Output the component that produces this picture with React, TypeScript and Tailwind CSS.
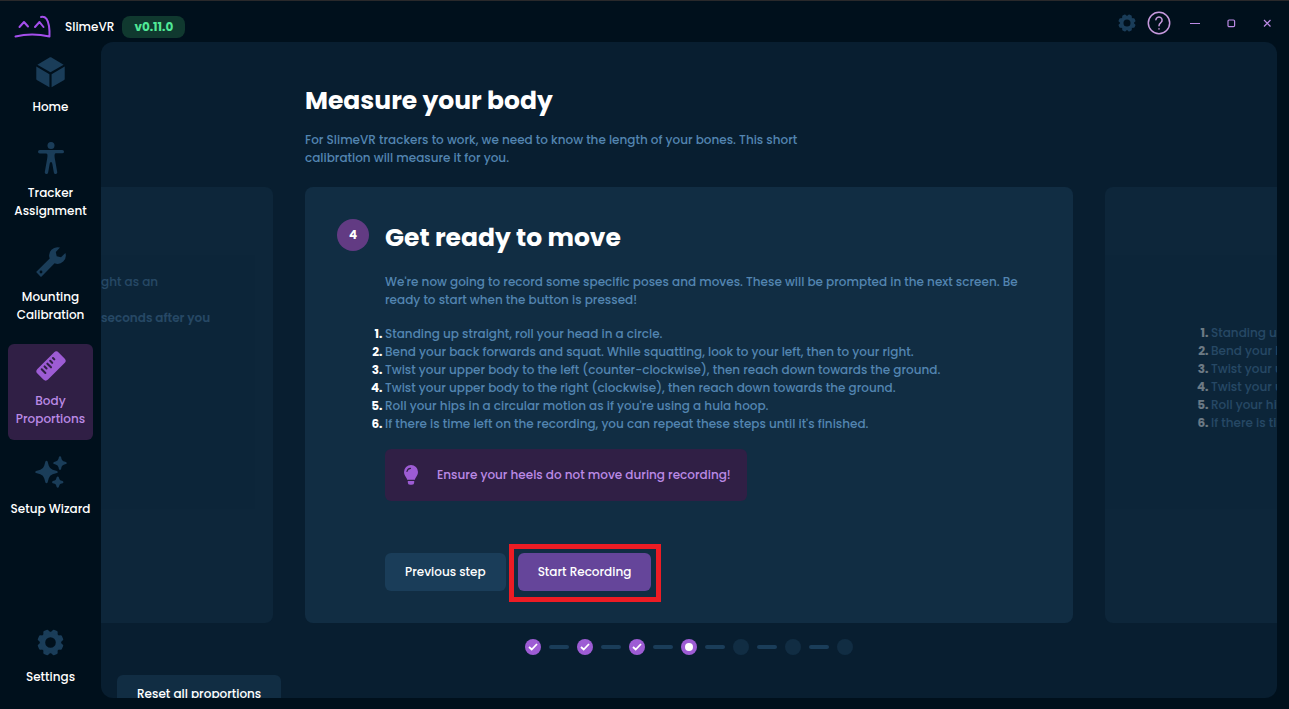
import type { ReactNode } from "react";
import { HiCube, HiSparkles } from "react-icons/hi2";
import { IoBody } from "react-icons/io5";

const MOVES = [
  "Standing up straight, roll your head in a circle.",
  "Bend your back forwards and squat. While squatting, look to your left, then to your right.",
  "Twist your upper body to the left (counter-clockwise), then reach down towards the ground.",
  "Twist your upper body to the right (clockwise), then reach down towards the ground.",
  "Roll your hips in a circular motion as if you're using a hula hoop.",
  "If there is time left on the recording, you can repeat these steps until it's finished.",
];

const PROGRESS = ["done", "done", "done", "current", "todo", "todo", "todo"];

const GEAR_TEETH = [22.5, 67.5, 112.5, 157.5, 202.5, 247.5, 292.5, 337.5];

function SlimeLogo() {
  return (
    <svg width="38" height="24" viewBox="0 0 38 24" fill="none" stroke="#a44fec" strokeWidth="2" strokeLinecap="round" strokeLinejoin="round">
      <path d="M27 2c5-1 7 3 8 9 .6 4 .6 7 .5 10.500C24 19 12 19 1.500 21.500" />
      <path d="M5.500 12l4.500-5 4 4.500M21 12L25.500 7l4 5" />
    </svg>
  );
}

function GearIcon({ size }: { size: number }) {
  return (
    <svg width={size} height={size} viewBox="0 0 28 28" fill="#1a3d59">
      <circle cx="14" cy="14" r="8.300" fill="none" stroke="#1a3d59" strokeWidth="5.600" />
      {GEAR_TEETH.map((angle) => (
        <path
          key={angle}
          transform={`rotate(${angle} 14 14)`}
          d="M10 4.500L11.200 1.300Q11.500.5 12.300.5H15.700Q16.500.5 16.800 1.300L18 4.500Z"
        />
      ))}
    </svg>
  );
}

function WrenchIcon() {
  return (
    <svg width="30" height="30" viewBox="0 0 30 30" fill="#1a3d59">
      <path
        fillRule="evenodd"
        d="M24 .6L19.800 5l.9 4.300 4.300.9L29.400 6a8.300 8.300 0 0 1-10.800 10.300L5.600 29.400Q5 30 4.400 29.400L.6 25.600Q0 25 .6 24.400L13.700 11.400A8.300 8.300 0 0 1 24 .6ZM5 23.600a1.400 1.400 0 1 0 0 2.800 1.400 1.400 0 0 0 0-2.800Z"
      />
    </svg>
  );
}

function RulerIcon() {
  return (
    <svg width="30" height="30" viewBox="0 0 32 32">
      <g transform="rotate(-45 16 16)">
        <rect x="0" y="8" width="32" height="16" rx="3.500" fill="#9d5cd4" />
        <path d="M6.500 11.500v5.500M10.800 11.500v3M15 11.500v5.500M19.300 11.500v3M23.500 11.500v2" stroke="#301f45" strokeWidth="2.200" strokeLinecap="round" />
      </g>
    </svg>
  );
}

function BulbIcon() {
  return (
    <svg width="20" height="20" viewBox="0 0 20 20">
      <path d="M10 0a7 7 0 0 0-7 7c0 3 1.700 4.500 2.600 6.200.3.600.4 1 .5 1.600h7.800c.1-.6.200-1 .5-1.600C15.300 11.500 17 10 17 7a7 7 0 0 0-7-7Z" fill="#9d5cd4" />
      <path d="M6.800 16h6.400v1.500a2.300 2.300 0 0 1-2.300 2.300h-1.800a2.300 2.300 0 0 1-2.300-2.300Z" fill="#9d5cd4" />
      <path d="M6 6.500A4 4 0 0 1 9.500 3.300" stroke="#301f45" strokeWidth="1.200" fill="none" strokeLinecap="round" />
    </svg>
  );
}

function NavItem({ icon, active, children }: { icon: ReactNode; active?: boolean; children: ReactNode }) {
  return (
    <a
      href="#"
      className={
        active
          ? "flex flex-col items-center gap-2 rounded-md bg-[#301f45] pt-1.5 pb-3 text-center text-[#bb8ae5]"
          : "flex flex-col items-center gap-2 pt-1.5 pb-3 text-center text-white"
      }
    >
      <span className="flex min-h-8 items-center justify-center text-[#1a3d59]">{icon}</span>
      <span className="pt-0.5 whitespace-nowrap">{children}</span>
    </a>
  );
}

function Moves() {
  return (
    <ol className="list-decimal whitespace-nowrap text-[#5385b1] marker:font-bold marker:text-white">
      {MOVES.map((move) => (
        <li key={move}>{move}</li>
      ))}
    </ol>
  );
}

export default function App() {
  return (
    <div className="flex h-screen flex-col overflow-hidden border-t border-[#29292b] bg-[#00101c] font-['Poppins','Inter',sans-serif] text-[12px] leading-[18px] font-medium text-white">
      <header className="flex h-[41px] shrink-0 items-center pt-2.5 pr-4 pl-3.5">
        <SlimeLogo />
        <span className="ml-[13px]">SlimeVR</span>
        <span className="ml-2 rounded-lg bg-[#10392f] px-3 py-0.5 font-bold text-[#50e897]">v0.11.0</span>
        <div className="ml-auto flex items-center pb-2">
          <button aria-label="Settings">
            <GearIcon size={18} />
          </button>
          <button aria-label="Help" className="ml-[11px]">
            <svg width="24" height="24" viewBox="0 0 24 24" fill="none" stroke="#c79ade" strokeWidth="1.500" strokeLinecap="round">
              <circle cx="12" cy="12" r="10.700" />
              <path d="M8.900 8.800a3.100 3.100 0 1 1 5 2.700c-1.200.9-1.900 1.400-1.900 3.200M12 17.800v.1" />
            </svg>
          </button>
          <button aria-label="Minimize" className="ml-4">
            <svg width="16" height="16" viewBox="0 0 16 16" stroke="#bb8ae5">
              <path d="M3 8.500h10" />
            </svg>
          </button>
          <button aria-label="Maximize" className="ml-5">
            <svg width="16" height="16" viewBox="0 0 16 16" fill="none" stroke="#bb8ae5" strokeWidth="1.200">
              <rect x="5" y="5" width="6.600" height="6.600" rx="1.200" />
            </svg>
          </button>
          <button aria-label="Close" className="ml-5 -mr-0.5">
            <svg width="16" height="16" viewBox="0 0 16 16" stroke="#bb8ae5" strokeWidth="1.200">
              <path d="M5 5l6.500 6.500M11.500 5L5 11.500" />
            </svg>
          </button>
        </div>
      </header>

      <div className="flex min-h-0 grow pr-3 pb-[11px]">
        <nav className="flex w-[101px] shrink-0 flex-col gap-2 px-2 pt-2">
          <NavItem icon={<HiCube size={35} className="-my-0.5" />}>Home</NavItem>
          <NavItem icon={<IoBody size={32} />}>
            Tracker
            <br />
            Assignment
          </NavItem>
          <NavItem icon={<WrenchIcon />}>
            Mounting
            <br />
            Calibration
          </NavItem>
          <NavItem active icon={<RulerIcon />}>
            Body
            <br />
            Proportions
          </NavItem>
          <NavItem icon={<HiSparkles size={36} />}>Setup Wizard</NavItem>
          <div className="mt-auto">
            <NavItem icon={<GearIcon size={27} />}>Settings</NavItem>
          </div>
        </nav>

        <main className="flex min-w-0 grow flex-col overflow-hidden rounded-xl bg-[#081e30] pt-[41px]">
          <div className="mx-auto w-[768px]">
            <h1 className="text-[25px] leading-9 font-bold">Measure your body</h1>
            <p className="max-w-[512px] pt-3 text-[#5385b1]">
              For SlimeVR trackers to work, we need to know the length of your bones. This short calibration will measure it for you.
            </p>
          </div>

          <div className="mt-5 flex shrink-0 justify-center gap-8">
            <section className="w-[768px] shrink-0 rounded-lg bg-[#112d43] pt-[86px] opacity-50">
              <p className="ml-auto w-[172px] text-[#5385b1] opacity-80">
                ght as an
                <br />
                <br />
                <span className="font-semibold">seconds after you</span>
              </p>
            </section>

            <section className="flex h-[436px] w-[768px] shrink-0 gap-4 rounded-lg bg-[#112d43] p-8">
              <span className="flex size-8 shrink-0 items-center justify-center rounded-full bg-[#623b83] font-bold">4</span>
              <div className="flex grow flex-col items-start">
                <h2 className="pt-px text-[25px] leading-9 font-bold">Get ready to move</h2>
                <p className="max-w-[640px] pt-[17px] pb-4 text-[#5385b1]">
                  We're now going to record some specific poses and moves. These will be prompted in the next screen. Be ready to start when the button is pressed!
                </p>
                <Moves />
                <div className="mt-4 flex items-center gap-4 rounded-md bg-[#301f45] p-4 text-[#bb8ae5]">
                  <BulbIcon />
                  <span>Ensure your heels do not move during recording!</span>
                </div>
                <div className="mt-auto -mb-[11px] flex items-start gap-[3px]">
                  <button className="mt-[9px] h-[38px] rounded-md bg-[#1a3d59] px-5">Previous step</button>
                  <div className="border-[5px] border-[#ed1c24] pt-1 pr-[5px] pb-1.5 pl-1">
                    <button className="h-[38px] rounded-md bg-[#65459a] px-5">Start Recording</button>
                  </div>
                </div>
              </div>
            </section>

            <section className="w-[768px] shrink-0 rounded-lg bg-[#112d43] pt-[137px] pl-[106px] opacity-50">
              <div className="opacity-80">
                <Moves />
              </div>
            </section>
          </div>

          <div className="mt-4 flex items-center justify-center gap-2">
            {PROGRESS.map((state, index) => (
              <div key={index} className="flex items-center gap-2">
                {index > 0 && <span className="h-1 w-5 rounded-full bg-[#1a3d59]" />}
                <span
                  className={
                    state === "todo"
                      ? "size-4 rounded-full bg-[#112d43]"
                      : "flex size-4 items-center justify-center rounded-full bg-[#9d5cd4]"
                  }
                >
                  {state === "done" && (
                    <svg width="10" height="10" viewBox="0 0 10 10" fill="none" stroke="white" strokeWidth="1.800">
                      <path d="M1 5l2.700 2.500L9 2" />
                    </svg>
                  )}
                  {state === "current" && <span className="size-2 rounded-full bg-white" />}
                </span>
              </div>
            ))}
          </div>

          <div className="shrink-0 px-4 pt-5">
            <button className="h-[38px] rounded-md bg-[#112d43] px-5">Reset all proportions</button>
          </div>
        </main>
      </div>
    </div>
  );
}
